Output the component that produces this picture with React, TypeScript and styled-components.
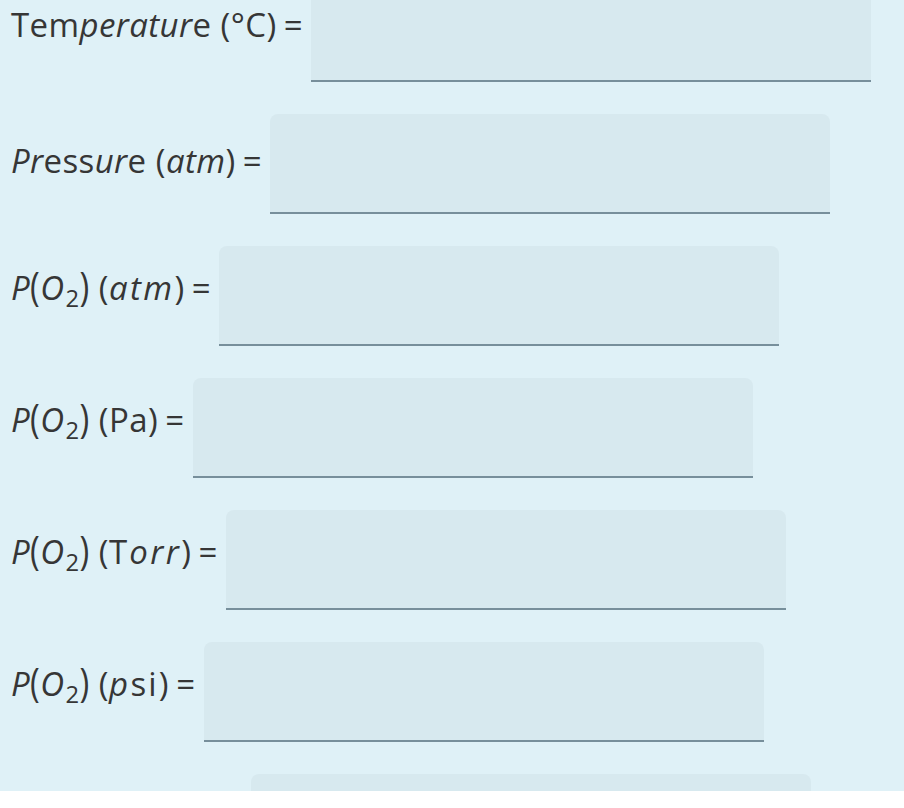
import React from "react";
import styled, { createGlobalStyle } from "styled-components";

const Global = createGlobalStyle`
  html, body { margin: 0; padding: 0; background: #ffffff; }
  #root { width: 904px; }
`;

const Panel = styled.div`
  height: 791px;
  overflow: hidden;
  background: #dff1f7;
`;

const List = styled.div`
  display: flex;
  flex-direction: column;
  gap: 32px;
  margin-top: -18px;
  padding-left: 11px;
`;

const Row = styled.div`
  display: flex;
  align-items: center;
`;

const Label = styled.label<{ $lift: number }>`
  display: inline-flex;
  align-items: baseline;
  white-space: nowrap;
  font-family: "Open Sans", "DejaVu Sans", sans-serif;
  font-size: 33px;
  letter-spacing: 0.4px;
  color: #363636;
  margin-bottom: ${(p) => p.$lift}px;
`;

const V = styled.i<{ $wide?: boolean }>`
  font-style: italic;
  letter-spacing: ${(p) => (p.$wide ? "2.4px" : "inherit")};
`;

const Wide = styled.span`
  letter-spacing: 2.2px;
`;

const Gap = styled.span`
  display: inline-block;
  width: 0.28em;
`;

const Big = styled.span`
  display: inline-block;
  transform: scaleY(1.2);
  transform-origin: 50% 62%;
`;

const Sub = styled.span`
  font-size: 0.72em;
  position: relative;
  top: 0.32em;
  margin-left: 1px;
`;

const Eq = styled.span`
  margin-left: 0.22em;
`;

const Field = styled.input<{ $indent: number }>`
  box-sizing: content-box;
  width: 560px;
  height: 98px;
  padding: 0;
  margin: 0 0 0 ${(p) => p.$indent}px;
  border: none;
  border-bottom: 2px solid #778f9b;
  border-radius: 8px 8px 0 0;
  background: #d7e9ef;
  outline: none;
  flex: none;
`;

const PO2 = () => (
  <>
    <V>P</V>
    <Big>(</Big>
    <V>O</V>
    <Sub>2</Sub>
    <Big>)</Big>
    <Gap />
  </>
);

type RowDef = {
  id: string;
  label?: React.ReactNode;
  lift?: number;
  indent?: number;
};

const rows: RowDef[] = [
  {
    id: "temp",
    lift: 15,
    label: (
      <>
        Tem<V>peratur</V>e<Gap />(°C)
      </>
    ),
  },
  {
    id: "pressure",
    lift: 8,
    label: (
      <>
        <V>Pr</V>ess<V>ur</V>e<Gap />(<V>atm</V>)
      </>
    ),
  },
  {
    id: "po2-atm",
    lift: 18,
    label: (
      <>
        <PO2 />(<V $wide>atm</V>)
      </>
    ),
  },
  {
    id: "po2-pa",
    lift: 18,
    label: (
      <>
        <PO2 />(Pa)
      </>
    ),
  },
  {
    id: "po2-torr",
    lift: 18,
    label: (
      <>
        <PO2 />(<Wide>T </Wide>
        <V $wide>orr</V>)
      </>
    ),
  },
  {
    id: "po2-psi",
    lift: 18,
    label: (
      <>
        <PO2 />(<V $wide>p</V>
        <Wide>si</Wide>)
      </>
    ),
  },
  { id: "next", indent: 240 },
];

export default function App() {
  return (
    <>
      <Global />
      <Panel>
        <List>
          {rows.map((r) => (
            <Row key={r.id}>
              {r.label && (
                <Label htmlFor={r.id} $lift={r.lift ?? 0}>
                  {r.label}
                  <Eq>=</Eq>
                </Label>
              )}
              <Field id={r.id} type="text" $indent={r.indent ?? 8} />
            </Row>
          ))}
        </List>
      </Panel>
    </>
  );
}
